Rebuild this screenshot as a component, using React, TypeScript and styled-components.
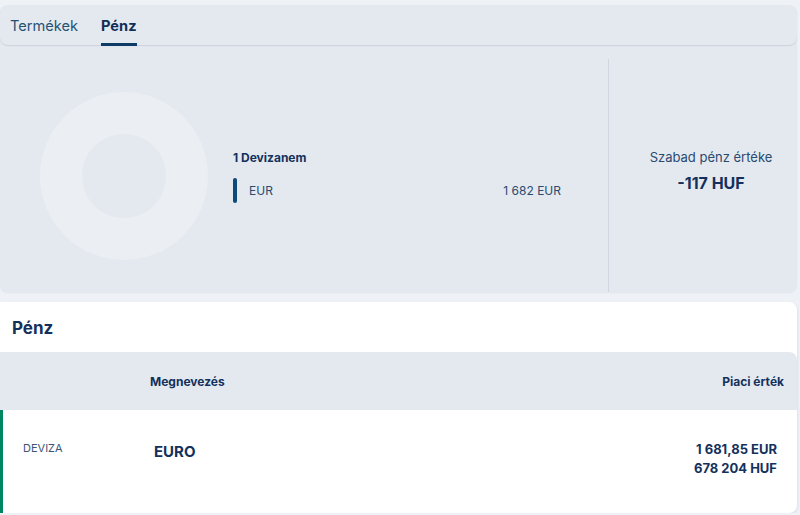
import React from 'react';
import styled, { createGlobalStyle } from 'styled-components';

const GlobalStyle = createGlobalStyle`
  body {
    margin: 0;
    background: #eef1f6;
    font-family: Inter, "Noto Sans", sans-serif;
    color: #13315c;
  }
`;

const Page = styled.div`
  width: 797px;
  padding-top: 5px;
`;

const TopCard = styled.section`
  background: #e4e9f0;
  border-radius: 8px;
  box-shadow: 0 1px 2px rgba(20, 40, 80, 0.06);
`;

const TabBar = styled.nav`
  height: 40px;
  display: flex;
  align-items: stretch;
  gap: 23px;
  padding-left: 10px;
  border-radius: 8px;
  box-shadow: 0 1px 1px rgba(30, 50, 90, 0.12);
`;

const Tab = styled.div<{ $active?: boolean }>`
  display: flex;
  align-items: center;
  padding-top: 4px;
  font-size: 14.6px;
  font-weight: ${(p) => (p.$active ? 700 : 400)};
  color: ${(p) => (p.$active ? '#0f2f57' : '#245275')};
  border-bottom: 3px solid ${(p) => (p.$active ? '#0d3b66' : 'transparent')};
  box-sizing: border-box;
  margin-bottom: -1px;
`;

const Summary = styled.div`
  display: grid;
  grid-template-columns: 608px 1fr;
  height: 247px;
  padding-top: 14px;
  box-sizing: border-box;
`;

const ChartSide = styled.div`
  display: flex;
  align-items: center;
  padding-left: 40px;
  gap: 25px;
  padding-top: 1px;
`;

const Legend = styled.div`
  width: 328px;
  display: flex;
  flex-direction: column;
  gap: 13px;
`;

const LegendTitle = styled.div`
  font-size: 12px;
  font-weight: 700;
  color: #13315c;
`;

const LegendRow = styled.div`
  display: flex;
  align-items: center;
  height: 25px;
  font-size: 12px;
  color: #2a4a6f;
`;

const LegendBar = styled.span<{ $color: string }>`
  width: 4px;
  height: 25px;
  border-radius: 2px;
  background: ${(p) => p.$color};
  margin-right: 12px;
`;

const LegendValue = styled.span`
  margin-left: auto;
`;

const FreeCash = styled.div`
  border-left: 1px solid #cfd6e0;
  display: flex;
  flex-direction: column;
  align-items: center;
  justify-content: center;
  gap: 8px;
  padding-left: 16px;
  padding-bottom: 10px;
`;

const FreeLabel = styled.div`
  font-size: 13px;
  color: #2a4a6f;
`;

const FreeValue = styled.div`
  font-size: 16px;
  font-weight: 700;
  color: #13315c;
`;

const CashSection = styled.section`
  margin-top: 10px;
  background: #fff;
  border-radius: 0 8px 8px 0;
  box-shadow: 1px 1px 2px rgba(20, 40, 80, 0.08);
`;

const SectionTitle = styled.h2`
  margin: 0;
  height: 50px;
  display: flex;
  align-items: center;
  padding-left: 12px;
  padding-top: 1px;
  box-sizing: border-box;
  font-size: 17px;
  font-weight: 700;
  color: #13315c;
`;

const TableHead = styled.div`
  height: 58px;
  display: grid;
  grid-template-columns: 150px 1fr auto;
  align-items: center;
  background: #e4e9f0;
  border-radius: 0 8px 0 0;
  padding-right: 13px;
  font-size: 12px;
  font-weight: 700;
  color: #13315c;
`;

const TableRow = styled.div<{ $accent: string }>`
  height: 103px;
  display: grid;
  grid-template-columns: 151px 1fr auto;
  align-items: start;
  border-left: 3px solid ${(p) => p.$accent};
  padding: 30px 20px 0 0;
  box-sizing: border-box;
`;

const TypeCell = styled.div`
  padding-left: 20px;
  padding-top: 1px;
  font-size: 11px;
  color: #3b5577;
`;

const NameCell = styled.div`
  font-size: 15px;
  font-weight: 700;
  color: #13315c;
  padding-top: 2px;
`;

const ValueCell = styled.div`
  text-align: right;
  font-size: 13px;
  font-weight: 700;
  line-height: 19px;
  color: #13315c;
`;

const Donut = () => (
  <svg width="168" height="168" viewBox="0 0 168 168">
    <circle cx="84" cy="84" r="63" fill="none" stroke="#ebeef3" strokeWidth="42" />
  </svg>
);

export default function App() {
  return (
    <Page>
      <GlobalStyle />
      <TopCard>
        <TabBar>
          <Tab>Termékek</Tab>
          <Tab $active>Pénz</Tab>
        </TabBar>
        <Summary>
          <ChartSide>
            <Donut />
            <Legend>
              <LegendTitle>1 Devizanem</LegendTitle>
              <LegendRow>
                <LegendBar $color="#0d4a7a" />
                EUR
                <LegendValue>1 682 EUR</LegendValue>
              </LegendRow>
            </Legend>
          </ChartSide>
          <FreeCash>
            <FreeLabel>Szabad pénz értéke</FreeLabel>
            <FreeValue>-117 HUF</FreeValue>
          </FreeCash>
        </Summary>
      </TopCard>
      <CashSection>
        <SectionTitle>Pénz</SectionTitle>
        <TableHead>
          <span />
          <span>Megnevezés</span>
          <span>Piaci érték</span>
        </TableHead>
        <TableRow $accent="#00875f">
          <TypeCell>DEVIZA</TypeCell>
          <NameCell>EURO</NameCell>
          <ValueCell>
            1 681,85 EUR
            <br />
            678 204 HUF
          </ValueCell>
        </TableRow>
      </CashSection>
    </Page>
  );
}
